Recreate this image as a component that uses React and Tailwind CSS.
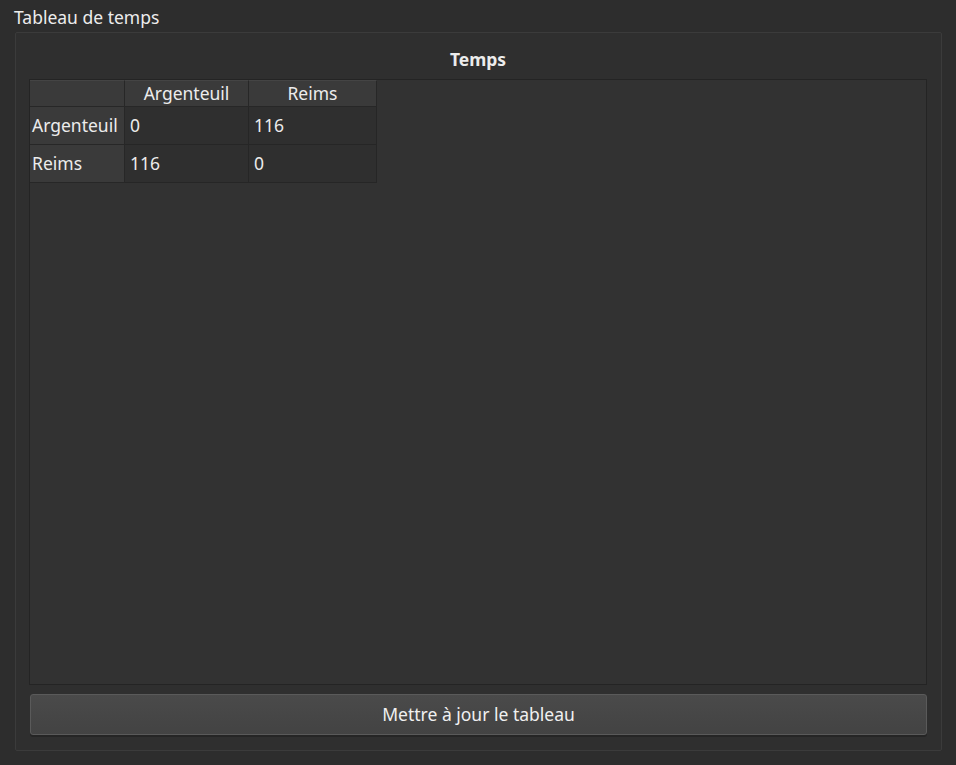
import React from 'react'

const cities = ['Argenteuil', 'Reims']
const temps = [
    [0, 116],
    [116, 0],
]

// Qt-like dark table widget
const TimeTable = () => {
    return (
        <div className='flex flex-col'>
            <div className='flex h-[27px]'>
                <div className='w-[95px] bg-[#3a3a3a] border-r border-b border-[#272727] border-t border-t-[#444]'></div>
                <div className='w-[124px] bg-[#3a3a3a] border-r border-b border-[#272727] border-t border-t-[#444] flex items-center justify-center'>
                    Argenteuil
                </div>
                <div className='w-[128px] bg-[#3a3a3a] border-r border-b border-[#272727] border-t border-t-[#444] flex items-center justify-center'>
                    Reims
                </div>
            </div>
            {cities.map((city, i) => (
                <div key={city} className='flex h-[38px]'>
                    <div className='w-[95px] bg-[#3a3a3a] border-r border-b border-[#272727] flex items-center pl-[2px] whitespace-nowrap'>
                        {city}
                    </div>
                    {temps[i].map((val, j) => (
                        <div
                            key={j}
                            className={(j === 0 ? 'w-[124px]' : 'w-[128px]') + ' bg-[#2f2f2f] border-r border-b border-[#262626] flex items-center pl-[5px]'}
                        >
                            {val}
                        </div>
                    ))}
                </div>
            ))}
        </div>
    )
}

const App = () => {
    return (
        <div
            className='w-[956px] h-[765px] bg-[#2d2d2d] text-[#ececec] text-[17.5px] flex flex-col overflow-hidden'
            style={{ fontFamily: '"Noto Sans", "Open Sans", sans-serif' }}
        >
            {/* group box title */}
            <div className='pl-[14px] pt-[6px] h-[32px] leading-[22px]'>Tableau de temps</div>

            {/* group box frame */}
            <div className='ml-[15px] mr-[14px] mb-[14px] flex-1 border border-[#3b3b3b] rounded-[2px] bg-[#2f2f2f] flex flex-col pl-[13px] pr-[14px] pb-[15px]'>
                <div className='h-[46px] flex items-center justify-center font-bold pt-[6px]'>Temps</div>

                {/* table viewport */}
                <div className='flex-1 border border-[#242424] bg-[#323232] p-0'>
                    <TimeTable />
                </div>

                {/* button */}
                <button className='mt-[9px] h-[41px] ml-[1px] rounded-[3px] border border-[#5a5a5a] bg-gradient-to-b from-[#4a4a4a] to-[#434343] text-[#f0f0f0] shadow-[0_2px_0_#252525]'>
                    Mettre à jour le tableau
                </button>
            </div>
        </div>
    )
}

export default App
